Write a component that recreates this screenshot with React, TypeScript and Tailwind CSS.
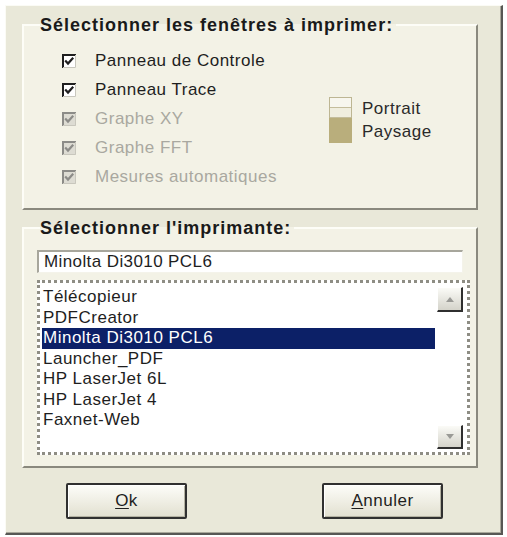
import React from 'react';

const checks = [
  { label: 'Panneau de Controle', enabled: true },
  { label: 'Panneau Trace', enabled: true },
  { label: 'Graphe XY', enabled: false },
  { label: 'Graphe FFT', enabled: false },
  { label: 'Mesures automatiques', enabled: false },
];

const printers = [
  'Télécopieur',
  'PDFCreator',
  'Minolta Di3010 PCL6',
  'Launcher_PDF',
  'HP LaserJet 6L',
  'HP LaserJet 4',
  'Faxnet-Web',
];

function CheckBox({ enabled }: { enabled: boolean }) {
  const edge = enabled ? '#1f1f1f' : '#8c8c88';
  return (
    <svg width="14" height="14" viewBox="0 0 14 14" className="shrink-0">
      <rect x="0" y="0" width="14" height="14" fill={enabled ? '#ffffff' : '#dddcd3'} />
      <path d="M1 14 V1 H14" stroke={edge} strokeWidth="2" fill="none" />
      <path d="M13.5 1 V13.5 H1" stroke="#c8c7bd" strokeWidth="1" fill="none" />
      <path d="M3.2 6.6 L6 9.6 L11.2 3.8" stroke={edge} strokeWidth="2.2" fill="none" />
    </svg>
  );
}

function OrientationIcon() {
  return (
    <svg width="23" height="46" viewBox="0 0 23 46" className="shrink-0">
      <rect x="0.5" y="0.5" width="22" height="45" fill="#f7f6ee" stroke="#bdb693" />
      <rect x="1" y="11" width="21" height="10" fill="#f0eedf" />
      <line x1="1" y1="10.5" x2="22" y2="10.5" stroke="#c4bd9c" />
      <line x1="1" y1="20.5" x2="22" y2="20.5" stroke="#c4bd9c" />
      <rect x="0" y="21" width="23" height="25" fill="#b9ae7c" />
    </svg>
  );
}

function ScrollButton({ up }: { up: boolean }) {
  return (
    <div
      className={`flex w-[26px] items-center justify-center border-t border-l border-t-white border-l-white border-r-2 border-b-2 border-r-[#2f2f2f] border-b-[#2f2f2f] bg-gradient-to-b from-[#fbfbf7] to-[#d4d3ca] ${
        up ? 'h-[25px]' : 'h-[24px]'
      }`}
    >
      <svg width="8" height="5" viewBox="0 0 8 5">
        <polygon points={up ? '0,5 8,5 4,0' : '0,0 8,0 4,5'} fill="#9a9a96" />
      </svg>
    </div>
  );
}

function Button({ hot, rest }: { hot: string; rest: string }) {
  return (
    <button
      type="button"
      className="flex h-[36px] w-[121px] items-center justify-center rounded-[2px] border-2 border-[#303030] bg-gradient-to-b from-[#fdfdf9] to-[#e2e0d0] text-[17px] tracking-[0.5px] text-[#1e1e1e] shadow-[inset_1px_1px_0_#ffffff,inset_-1px_-1px_0_#b4b2a2]"
    >
      <span>
        <span className="underline underline-offset-2">{hot}</span>
        {rest}
      </span>
    </button>
  );
}

export default function App() {
  return (
    <div className="h-[537px] w-[507px] overflow-hidden bg-white pt-[5px] pl-[5px] font-['Liberation_Sans',Arial,sans-serif]">
      <div className="flex h-[530px] w-[498px] flex-col border-t border-l border-t-[#fbfbf5] border-l-[#fbfbf5] border-r-2 border-b-2 border-r-[#575754] border-b-[#575754] bg-[#e9e8d9] pt-[10px] pl-[16px] shadow-[inset_-1px_-1px_0_#a9a89b]">
        {/* Fenêtres */}
        <fieldset className="w-[456px] border-2 border-t-[#fdfdf7] border-l-[#fdfdf7] border-r-[#8a897e] border-b-[#8a897e] bg-[#f3f2e6]">
          <legend className="ml-[16px] pr-[3px] text-[18px] leading-[18px] font-bold tracking-[1px] text-[#1a1a1a]">
            Sélectionner les fenêtres à imprimer:
          </legend>
          <div className="flex items-center pt-[12px] pb-[17px] pl-[38px]">
            <div className="flex w-[267px] flex-col">
              {checks.map((c) => (
                <div key={c.label} className="flex h-[29px] items-center gap-[19px]">
                  <CheckBox enabled={c.enabled} />
                  <span
                    className={`text-[17px] leading-[20px] tracking-[0.5px] whitespace-nowrap ${
                      c.enabled ? 'text-[#1e1e1e]' : 'text-[#a9a8a0]'
                    }`}
                  >
                    {c.label}
                  </span>
                </div>
              ))}
            </div>
            <div className="mt-[2px] flex items-center gap-[10px]">
              <OrientationIcon />
              <div className="flex flex-col text-[17px] leading-[23px] tracking-[0.5px] text-[#2a2a2a]">
                <span>Portrait</span>
                <span>Paysage</span>
              </div>
            </div>
          </div>
        </fieldset>

        {/* Imprimante */}
        <fieldset className="mt-[9px] w-[456px] border-2 border-t-[#fdfdf7] border-l-[#fdfdf7] border-r-[#8a897e] border-b-[#8a897e] bg-[#f3f2e6]">
          <legend className="ml-[16px] pr-[3px] text-[18px] leading-[18px] font-bold tracking-[1px] text-[#1a1a1a]">
            Sélectionner l'imprimante:
          </legend>
          <div className="flex flex-col items-start gap-[7px] pt-[13px] pb-[11px] pl-[13px]">
            <div className="flex h-[23px] w-[426px] items-center border-t-2 border-l-2 border-t-[#a7a69c] border-l-[#a7a69c] border-r border-b border-r-[#f4f3ea] border-b-[#f4f3ea] bg-white pl-[5px] text-[17px] tracking-[0.4px] text-[#1e1e1e]">
              Minolta Di3010 PCL6
            </div>
            <div className="flex h-[175px] w-[433px] border-[3px] border-dotted border-[#8e8d84] bg-white">
              <div className="flex flex-1 flex-col pt-[4px] pl-[2px]">
                {printers.map((p) => (
                  <div
                    key={p}
                    className={`h-[20.5px] pl-[1px] text-[17px] leading-[20.5px] tracking-[0.5px] whitespace-nowrap ${
                      p === 'Minolta Di3010 PCL6' ? 'bg-[#0c2067] text-white' : 'text-[#1e1e1e]'
                    }`}
                  >
                    {p}
                  </div>
                ))}
              </div>
              <div className="ml-[2px] mr-[4px] flex flex-col justify-between pt-[4px] pb-[3px]">
                <ScrollButton up />
                <ScrollButton up={false} />
              </div>
            </div>
          </div>
        </fieldset>

        <div className="mt-[15px] flex gap-[135px] pl-[44px]">
          <Button hot="O" rest="k" />
          <Button hot="A" rest="nnuler" />
        </div>
      </div>
    </div>
  );
}
